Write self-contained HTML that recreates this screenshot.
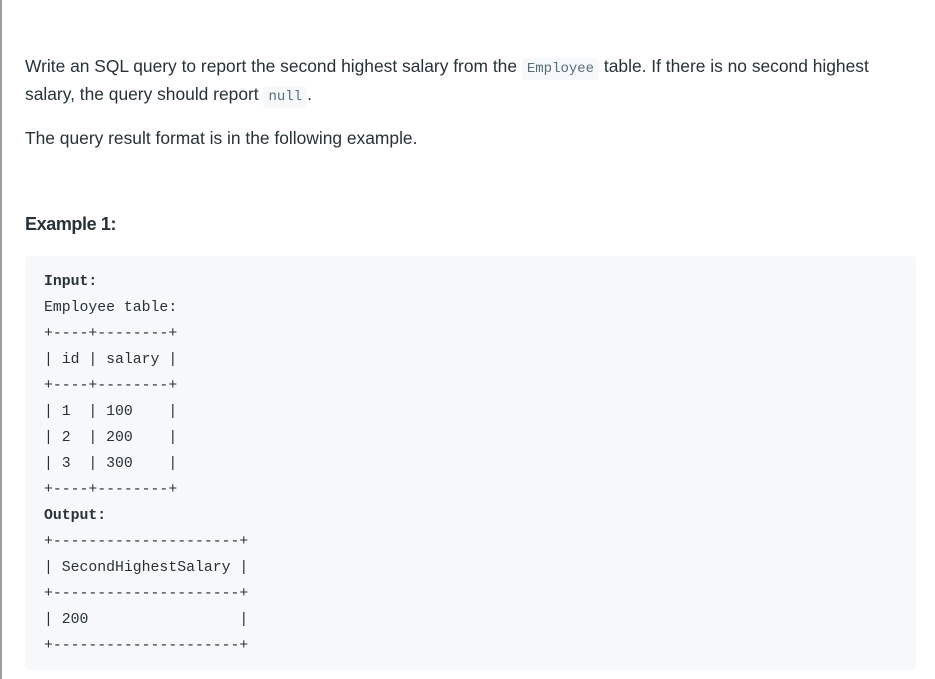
<!DOCTYPE html>
<html><head><meta charset="utf-8"><style>
html,body{margin:0;padding:0;background:#fff;}
body{width:935px;height:679px;position:relative;overflow:hidden;border-left:2px solid #9e9e9e;box-sizing:border-box;font-family:"Liberation Sans",sans-serif;color:#263238;}
.p{position:absolute;left:23px;font-size:17.4px;white-space:nowrap;letter-spacing:0;}
code{font-family:"Liberation Mono",monospace;font-size:14px;background:#f7f8fa;color:#546e7a;padding:3px 5px;border-radius:4px;letter-spacing:0;}
h3{position:absolute;left:23px;top:214px;margin:0;font-size:18px;font-weight:bold;color:#263238;letter-spacing:-0.4px;}
pre{position:absolute;left:23px;top:256px;width:891px;height:414px;margin:0;background:#f7f8fa;border-radius:4px;box-sizing:border-box;padding:13px 19px;font-family:"Liberation Mono",monospace;font-size:14.8px;line-height:26px;color:#263238;}
b{font-weight:bold;}
</style></head><body>
<div class="p" style="top:56px">Write an SQL query to report the second highest salary from the <code>Employee</code> table. If there is no second highest</div>
<div class="p" style="top:84px">salary, the query should report <code>null</code>.</div>
<div class="p" style="top:128px">The query result format is in the following example.</div>
<h3>Example 1:</h3>
<pre><b>Input:</b>
Employee table:
+----+--------+
| id | salary |
+----+--------+
| 1  | 100    |
| 2  | 200    |
| 3  | 300    |
+----+--------+
<b>Output:</b>
+---------------------+
| SecondHighestSalary |
+---------------------+
| 200                 |
+---------------------+</pre>
</body></html>
